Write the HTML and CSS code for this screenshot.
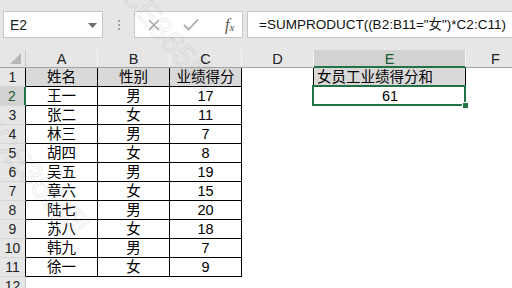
FILE: index.html
```html
<!DOCTYPE html>
<html lang="zh-CN">
<head>
<meta charset="utf-8">
<title>SUMPRODUCT</title>
<link rel="stylesheet" href="styles.css">
</head>
<body>
<div class="topbar">
  <div class="namebox">
    <span class="name">E2</span>
    <svg class="caret" width="9" height="5" viewBox="0 0 9 5"><path d="M0 0H9L4.5 5Z" fill="#6b6b6b"/></svg>
  </div>
  <div class="dots"><i></i><i></i><i></i></div>
  <div class="fxbox">
    <svg class="ico" width="12" height="12" viewBox="0 0 12 12"><path d="M1 1L11 11M11 1L1 11" stroke="#a8a8a8" stroke-width="1.6" fill="none"/></svg>
    <svg class="ico" width="16" height="13" viewBox="0 0 16 13"><path d="M1 7L5.5 11.5L15 1.5" stroke="#a8a8a8" stroke-width="1.8" fill="none"/></svg>
    <span class="fx">f<sub>x</sub></span>
  </div>
  <div class="formula">=SUMPRODUCT((B2:B11="女")*C2:C11)</div>
</div>

<div class="sheet">
  <div class="ch corner"><span class="tri"></span></div>
  <div class="ch">A</div><div class="ch">B</div><div class="ch">C</div><div class="ch">D</div><div class="ch sel">E</div><div class="ch">F</div>

  <div class="rh">1</div>
  <div class="c t hd">姓名</div><div class="c t hd">性别</div><div class="c t hd">业绩得分</div><div class="c eL"></div><div class="c t hd left">女员工业绩得分和</div><div class="c"></div>

  <div class="rh rsel">2</div>
  <div class="c t">王一</div><div class="c t">男</div><div class="c t">17</div><div class="c"></div><div class="c active">61<span class="selbox"></span></div><div class="c"></div>

  <div class="rh">3</div>
  <div class="c t">张二</div><div class="c t">女</div><div class="c t">11</div><div class="c"></div><div class="c"></div><div class="c"></div>

  <div class="rh">4</div>
  <div class="c t">林三</div><div class="c t">男</div><div class="c t">7</div><div class="c"></div><div class="c"></div><div class="c"></div>

  <div class="rh">5</div>
  <div class="c t">胡四</div><div class="c t">女</div><div class="c t">8</div><div class="c"></div><div class="c"></div><div class="c"></div>

  <div class="rh">6</div>
  <div class="c t">吴五</div><div class="c t">男</div><div class="c t">19</div><div class="c"></div><div class="c"></div><div class="c"></div>

  <div class="rh">7</div>
  <div class="c t">章六</div><div class="c t">女</div><div class="c t">15</div><div class="c"></div><div class="c"></div><div class="c"></div>

  <div class="rh">8</div>
  <div class="c t">陆七</div><div class="c t">男</div><div class="c t">20</div><div class="c"></div><div class="c"></div><div class="c"></div>

  <div class="rh">9</div>
  <div class="c t">苏八</div><div class="c t">女</div><div class="c t">18</div><div class="c"></div><div class="c"></div><div class="c"></div>

  <div class="rh">10</div>
  <div class="c t">韩九</div><div class="c t">男</div><div class="c t">7</div><div class="c"></div><div class="c"></div><div class="c"></div>

  <div class="rh">11</div>
  <div class="c t">徐一</div><div class="c t">女</div><div class="c t">9</div><div class="c"></div><div class="c"></div><div class="c"></div>

  <div class="rh last">12</div>
  <div class="c"></div><div class="c"></div><div class="c"></div><div class="c"></div><div class="c"></div><div class="c"></div>
</div>

<div class="wm wm1">OFFICE365网</div>
<div class="wm wm2">OFFICE365网</div>
</body>
</html>
```

FILE: styles.css
```css
html, body {
  margin: 0;
  padding: 0;
  width: 512px;
  height: 288px;
  overflow: hidden;
  background: #ffffff;
  font-family: "Liberation Sans", "Noto Sans CJK SC", sans-serif;
  color: #000;
}

.topbar {
  height: 50px;
  box-sizing: border-box;
  background: #e6e6e6;
  padding-top: 11px;
  display: flex;
  align-items: flex-start;
}

.namebox {
  margin-left: 3px;
  width: 100px;
  height: 27px;
  box-sizing: border-box;
  background: #fff;
  border: 1px solid #c6c6c6;
  display: flex;
  align-items: center;
  justify-content: space-between;
  padding: 0 5px 0 6px;
  font-size: 14px;
  color: #222;
}

.namebox .caret { margin-top: 1px; }

.dots {
  width: 31px;
  height: 27px;
  display: flex;
  flex-direction: column;
  align-items: center;
  justify-content: center;
  gap: 2px;
}
.dots i {
  display: block;
  width: 2px;
  height: 2px;
  background: #a3a3a3;
}

.fxbox {
  width: 109px;
  height: 27px;
  box-sizing: border-box;
  background: #fff;
  border: 1px solid #c6c6c6;
  display: flex;
  align-items: center;
  padding-left: 13px;
  gap: 23px;
}
.fx {
  font-family: "Liberation Serif", serif;
  font-style: italic;
  font-size: 16px;
  color: #555;
  margin-left: 3px;
  line-height: 1;
}
.fx sub {
  font-size: 11px;
  vertical-align: -1px;
}

.formula {
  margin-left: 4px;
  flex: 1;
  height: 27px;
  box-sizing: border-box;
  background: #fff;
  border: 1px solid #c6c6c6;
  border-right: none;
  padding-left: 11px;
  font-size: 13.5px;
  line-height: 25px;
  color: #111;
  white-space: nowrap;
}

.sheet {
  display: grid;
  grid-template-columns: 26px 72px 72px 72px 72px 152px 60px;
  grid-template-rows: 18px;
  grid-auto-rows: 19px;
}

.ch {
  box-sizing: border-box;
  background: #e6e6e6;
  border-right: 1px solid #f4f4f4;
  border-bottom: 1px solid #a2a2a2;
  text-align: center;
  font-size: 14.5px;
  line-height: 19px;
  color: #222;
}
.ch.sel {
  background: #d2d2d2;
  border-bottom: 2px solid #217346;
  color: #1c5a35;
}
.corner {
  position: relative;
  border-right-color: #c8c8c8;
}
.tri {
  position: absolute;
  right: 4px;
  bottom: 3px;
  width: 0;
  height: 0;
  border-left: 11px solid transparent;
  border-bottom: 11px solid #b8b8b8;
}

.rh {
  box-sizing: border-box;
  background: #e6e6e6;
  border-right: 1px solid #000;
  border-bottom: 1px solid #d6d6d6;
  text-align: center;
  font-size: 14px;
  line-height: 19px;
  color: #222;
}
.rh.rsel {
  background: #d2d2d2;
  border-right: 2px solid #217346;
  color: #1c5a35;
}
.rh.last { border-right-color: #c8c8c8; }

.c {
  box-sizing: border-box;
  font-size: 14.5px;
  line-height: 19px;
  text-align: center;
  white-space: nowrap;
  overflow: visible;
}
.c.t {
  border-right: 1px solid #000;
  border-bottom: 1px solid #000;
}
.c.hd { background: #d9d9d9; }
.c.left { text-align: left; padding-left: 3px; }
.c.eL { border-right: 1px solid #000; }

.c.active { position: relative; }
.selbox {
  position: absolute;
  left: -2px;
  top: -2px;
  right: 0;
  bottom: 0;
  border: 2px solid #217346;
}
.selbox::after {
  content: "";
  position: absolute;
  right: -4px;
  bottom: -4px;
  width: 5px;
  height: 5px;
  background: #217346;
  border-left: 1px solid #fff;
  border-top: 1px solid #fff;
}

.wm {
  position: absolute;
  font-family: "Liberation Sans", "Noto Sans CJK SC", sans-serif;
  font-size: 32px;
  color: transparent;
  -webkit-text-stroke: 1px rgba(120, 120, 120, 0.16);
  transform-origin: left top;
  transform: rotate(50deg);
  white-space: nowrap;
  pointer-events: none;
}
.wm1 { left: 100px; top: -85px; }
.wm2 { left: -30px; top: 60px; }
```
